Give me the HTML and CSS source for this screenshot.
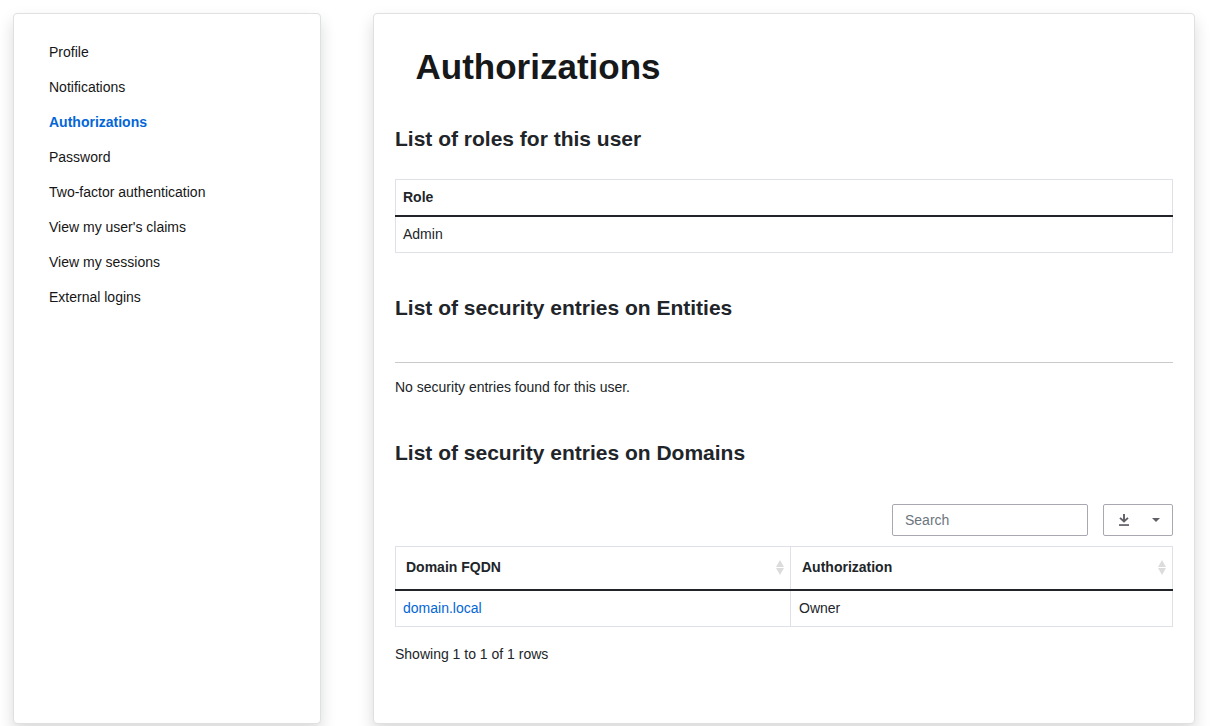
FILE: index.html
```html
<!DOCTYPE html>
<html lang="en">
<head>
<meta charset="utf-8">
<title>Authorizations</title>
<link rel="stylesheet" href="styles.css">
</head>
<body>
<div class="layout">
  <nav class="card sidebar">
    <a class="nav-link">Profile</a>
    <a class="nav-link">Notifications</a>
    <a class="nav-link active">Authorizations</a>
    <a class="nav-link">Password</a>
    <a class="nav-link">Two-factor authentication</a>
    <a class="nav-link">View my user's claims</a>
    <a class="nav-link">View my sessions</a>
    <a class="nav-link">External logins</a>
  </nav>
  <main class="card content">
    <h1 class="title">Authorizations</h1>

    <h2 class="heading">List of roles for this user</h2>
    <table class="table roles">
      <thead><tr><th>Role</th></tr></thead>
      <tbody><tr><td>Admin</td></tr></tbody>
    </table>

    <h2 class="heading">List of security entries on Entities</h2>
    <hr class="divider">
    <p class="empty">No security entries found for this user.</p>

    <h2 class="heading">List of security entries on Domains</h2>
    <div class="toolbar">
      <input class="search" type="text" placeholder="Search">
      <button class="export" type="button" aria-label="Export">
        <svg class="download" width="12" height="14" viewBox="0 0 12 14"><path d="M6 1v7.2M2 4.9L6 8.5l4-3.6" fill="none" stroke="#5f6066" stroke-width="1.9"/><path d="M1 11.2h10v1.7H1z" fill="#5f6066"/></svg>
        <svg class="caret" width="8" height="4" viewBox="0 0 8 4"><path d="M0 0h8L4 4z" fill="#5f6066"/></svg>
      </button>
    </div>
    <table class="table domains">
      <colgroup><col class="col-domain"><col></colgroup>
      <thead>
        <tr>
          <th><div class="sortable">Domain FQDN<svg width="8" height="15" viewBox="0 0 8 15"><path d="M4 0l4 7H0zM0 8h8l-4 7z" fill="#dcdcdc"/></svg></div></th>
          <th><div class="sortable">Authorization<svg width="8" height="15" viewBox="0 0 8 15"><path d="M4 0l4 7H0zM0 8h8l-4 7z" fill="#dcdcdc"/></svg></div></th>
        </tr>
      </thead>
      <tbody><tr><td><a class="link">domain.local</a></td><td>Owner</td></tr></tbody>
    </table>
    <p class="summary">Showing 1 to 1 of 1 rows</p>
  </main>
</div>
</body>
</html>
```
FILE: styles.css
```css
* { box-sizing: border-box; }
body {
  margin: 0;
  height: 726px;
  overflow: hidden;
  background: #fff;
  color: #212529;
  font: 14px/21px "Liberation Sans", Arial, sans-serif;
}
.layout { display: flex; gap: 52px; padding: 13px; }
.card {
  height: 711px;
  background: #fff;
  border: 1px solid #dfe0e2;
  border-radius: 4px;
  box-shadow: 0 8px 16px rgba(0, 0, 0, .15);
}
.sidebar {
  display: flex;
  flex-direction: column;
  width: 308px;
  padding: 21px 35px;
}
.nav-link { padding: 7px 0; color: #161616; }
.nav-link.active { color: #0366d6; font-weight: bold; }
.content { width: 822px; padding: 32px 21px 0; }
.title {
  margin: 0 0 38px;
  padding-left: 20.5px;
  color: #161819;
  font-size: 35px;
  line-height: 42px;
}
.heading { margin: 0; font-size: 21px; line-height: 25px; }
.table {
  width: 778px;
  border-collapse: collapse;
  table-layout: fixed;
}
.table th, .table td {
  padding: 7px;
  border: 1px solid #dee2e6;
  text-align: left;
}
.table th { border-bottom: 2px solid #212529; }
.roles { margin: 28px 0 42px; }
.divider {
  height: 1px;
  margin: 42px 0 14px;
  border: 0;
  background: #c8c9ca;
}
.empty { margin: 0 0 42px; }
.toolbar {
  display: flex;
  justify-content: flex-end;
  gap: 15px;
  margin: 39px 0 10px;
}
.search {
  width: 196px;
  height: 32px;
  padding: 0 12px;
  border: 1px solid #a8a8b0;
  border-radius: 2px;
  background: #fff;
  font: inherit;
}
.search::placeholder { color: #6c757d; opacity: 1; }
.export {
  display: flex;
  align-items: center;
  justify-content: space-between;
  width: 70px;
  height: 32px;
  padding: 0 12px 0 14px;
  border: 1px solid #a8a8b0;
  border-radius: 2px;
  background: #fff;
}
.col-domain { width: 395px; }
.table.domains th { padding: 0; }
.sortable {
  display: flex;
  align-items: center;
  justify-content: space-between;
  height: 42px;
  padding: 0 6px 2px 10px;
}
th + th .sortable { padding-left: 11px; }
.domains td + td { padding-left: 8px; }
.link { color: #0366d6; }
.summary { margin: 17px 0 0; }
```
